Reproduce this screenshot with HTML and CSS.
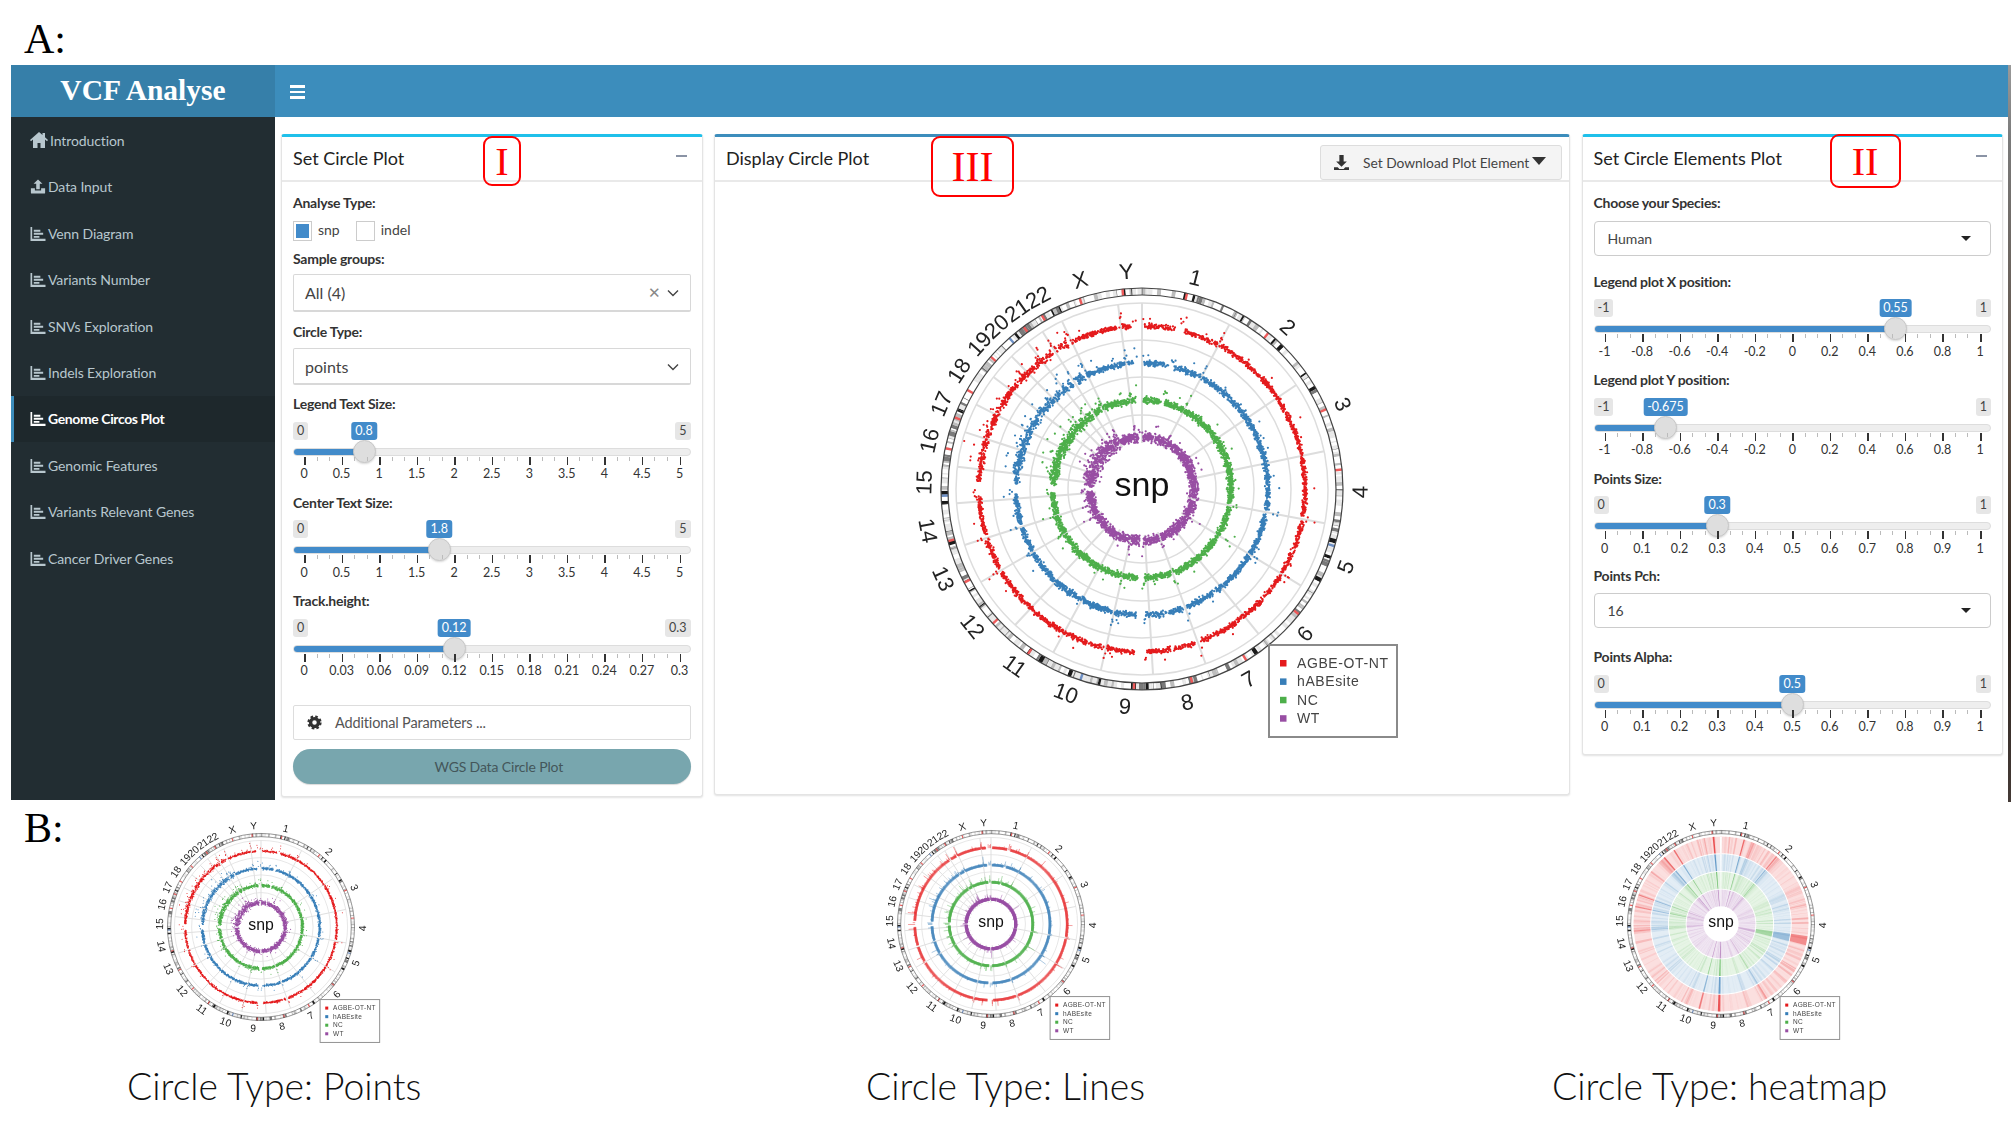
FILE: index.html
```html
<!DOCTYPE html>
<html lang="en">
<head>
<meta charset="utf-8">
<title>VCF Analyse</title>
<link rel="stylesheet" href="styles.css">
</head>
<body>
<div class="page">
  <div class="fig-head"><span class="fig-letter">A:</span></div>

  <section class="app">
    <header class="topbar">
      <div class="logo">VCF Analyse</div>
      <div class="nav"><span class="burger"><i></i><i></i><i></i></span></div>
    </header>
    <div class="app-body">
      <nav class="sidebar">
        <a class="item item-home"><svg class="ico" viewBox="0 0 18 16"><path d="M9 0 0 8l1 1.2L3 7.600V16h4.500v-5h3v5H15V7.600l2 1.600L18 8l-3-2.700V1h-2.500v2.100z"/></svg>Introduction</a>
        <a class="item"><svg class="ico" viewBox="0 0 18 16"><path d="M9 0 4 5h3v6h4V5h3zM1 10h4.500v2.500h7V10H17v5a1 1 0 0 1-1 1H2a1 1 0 0 1-1-1z"/></svg>Data Input</a>
        <a class="item"><svg class="ico" viewBox="0 0 16 16"><use href="#barchart"/></svg>Venn Diagram</a>
        <a class="item"><svg class="ico" viewBox="0 0 16 16"><use href="#barchart"/></svg>Variants Number</a>
        <a class="item"><svg class="ico" viewBox="0 0 16 16"><use href="#barchart"/></svg>SNVs Exploration</a>
        <a class="item"><svg class="ico" viewBox="0 0 16 16"><use href="#barchart"/></svg>Indels Exploration</a>
        <a class="item active"><svg class="ico" viewBox="0 0 16 16"><use href="#barchart"/></svg>Genome Circos Plot</a>
        <a class="item"><svg class="ico" viewBox="0 0 16 16"><use href="#barchart"/></svg>Genomic Features</a>
        <a class="item"><svg class="ico" viewBox="0 0 16 16"><use href="#barchart"/></svg>Variants Relevant Genes</a>
        <a class="item"><svg class="ico" viewBox="0 0 16 16"><use href="#barchart"/></svg>Cancer Driver Genes</a>
      </nav>

      <main class="content">
        <article class="box box-side box-left">
          <div class="box-head">
            <h3 class="box-title">Set Circle Plot</h3>
            <span class="tag tag-1">I</span>
            <span class="minus"></span>
          </div>
          <div class="box-body">
            <div class="lbl">Analyse Type:</div>
            <div class="checks">
              <span class="check on"></span><span class="check-text">snp</span>
              <span class="check"></span><span class="check-text">indel</span>
            </div>
            <div class="lbl lbl-a">Sample groups:</div>
            <div class="picker picker-a">All (4)
              <span class="picker-x">&#10005;</span>
              <svg class="chev" viewBox="0 0 12 8"><path d="M1 1.500 6 6.500 11 1.500"/></svg>
            </div>
            <div class="lbl lbl-b">Circle Type:</div>
            <div class="picker picker-b">points
              <svg class="chev" viewBox="0 0 12 8"><path d="M1 1.500 6 6.500 11 1.500"/></svg>
            </div>
            <div class="lbl lbl-d">Legend Text Size:</div>
            <div class="slider" data-min="0" data-max="5" data-value="0.8" data-ticks="0,0.5,1,1.5,2,2.5,3,3.5,4,4.5,5"></div>
            <div class="lbl">Center Text Size:</div>
            <div class="slider" data-min="0" data-max="5" data-value="1.8" data-ticks="0,0.5,1,1.5,2,2.5,3,3.5,4,4.5,5"></div>
            <div class="lbl">Track.height:</div>
            <div class="slider" data-min="0" data-max="0.3" data-value="0.12" data-ticks="0,0.03,0.06,0.09,0.12,0.15,0.18,0.21,0.24,0.27,0.3"></div>
            <div class="extra">
              <svg class="gear" viewBox="0 0 16 16"><circle cx="8" cy="8" r="4.200" class="gear-ring"/><circle cx="8" cy="8" r="6.300" class="gear-teeth"/></svg>
              Additional Parameters ...
            </div>
            <div class="run">WGS Data Circle Plot</div>
          </div>
        </article>

        <article class="box box-main">
          <div class="box-head">
            <h3 class="box-title">Display Circle Plot</h3>
            <span class="tag tag-3">III</span>
            <span class="dl-btn">
              <svg class="dl-ico" viewBox="0 0 14 14"><path d="M5 0h4v6h3L7 11 2 6h3zM0 11.500h3.500L5 13h4l1.500-1.500H14V14H0z"/></svg>
              Set Download Plot Element<i class="dl-caret"></i>
            </span>
          </div>
          <div class="box-plot">
            <svg class="circos circos-big" data-type="points" data-seed="11" viewBox="0 0 520 520"></svg>
          </div>
        </article>

        <article class="box box-side box-right">
          <div class="box-head">
            <h3 class="box-title">Set Circle Elements Plot</h3>
            <span class="tag tag-2">II</span>
            <span class="minus"></span>
          </div>
          <div class="box-body">
            <div class="lbl">Choose your Species:</div>
            <div class="picker picker-c">Human<i class="caret"></i></div>
            <div class="lbl lbl-c">Legend plot X position:</div>
            <div class="slider" data-min="-1" data-max="1" data-value="0.55" data-ticks="-1,-0.8,-0.6,-0.4,-0.2,0,0.2,0.4,0.6,0.8,1"></div>
            <div class="lbl">Legend plot Y position:</div>
            <div class="slider" data-min="-1" data-max="1" data-value="-0.675" data-ticks="-1,-0.8,-0.6,-0.4,-0.2,0,0.2,0.4,0.6,0.8,1"></div>
            <div class="lbl">Points Size:</div>
            <div class="slider" data-min="0" data-max="1" data-value="0.3" data-ticks="0,0.1,0.2,0.3,0.4,0.5,0.6,0.7,0.8,0.9,1"></div>
            <div class="lbl lbl-e">Points Pch:</div>
            <div class="picker picker-c">16<i class="caret"></i></div>
            <div class="lbl lbl-f">Points Alpha:</div>
            <div class="slider" data-min="0" data-max="1" data-value="0.5" data-ticks="0,0.1,0.2,0.3,0.4,0.5,0.6,0.7,0.8,0.9,1"></div>
          </div>
        </article>
      </main>
      <div class="edge"></div>
    </div>
  </section>

  <section class="gallery">
    <span class="fig-letter fig-b">B:</span>
    <svg class="circos circos-small s1" data-type="points" data-seed="21" viewBox="0 0 520 520"></svg>
    <svg class="circos circos-small s2" data-type="lines" data-seed="32" viewBox="0 0 520 520"></svg>
    <svg class="circos circos-small s2" data-type="heatmap" data-seed="43" viewBox="0 0 520 520"></svg>
    <div class="cap c1">Circle Type: Points</div>
    <div class="cap c2">Circle Type: Lines</div>
    <div class="cap c3">Circle Type: heatmap</div>
  </section>
</div>

<svg class="defs" width="0" height="0"><defs>
  <g id="barchart"><path d="M0 1h1.800v12.700H16V16H0zM3.500 4h7v2h-7zM3.500 7.300h10v2h-10zM3.500 10.600h6v2h-6z"/></g>
</defs></svg>
<script src="app.js"></script>
</body>
</html>
```
FILE: styles.css
```css
* { box-sizing: border-box; }
html, body { margin: 0; padding: 0; background: #fff; }
body { font-family: "Lato", "Noto Sans", sans-serif; color: #333; }
.page { width: 2011px; height: 1131px; overflow: hidden; position: relative; }
.defs { position: absolute; }

.fig-head { height: 65px; padding: 16px 0 0 24px; }
.fig-letter { font-family: "Liberation Serif", serif; font-size: 42px; line-height: 46px; color: #000; display: block; }

.app { margin-left: 11px; height: 735px; display: flex; flex-direction: column; }
.topbar { display: flex; height: 52px; flex: none; }
.logo { width: 264px; background: #367fa9; color: #fff; font-family: "Liberation Serif", serif; font-weight: 700; font-size: 29.500px; line-height: 50px; text-align: center; }
.nav { flex: 1; background: #3c8dbc; padding: 20px 0 0 15px; }
.burger { display: flex; flex-direction: column; gap: 3px; width: 15px; }
.burger i { display: block; height: 2.500px; background: #fff; }

.app-body { flex: 1; display: flex; min-height: 0; position: relative; }
.sidebar { width: 264px; flex: none; background: #222d32; padding-top: 0.300px; }
.item { height: 46.400px; display: flex; align-items: center; padding-left: 19px; font-size: 14px; color: #b8c7ce; letter-spacing: -0.100px; position: relative; }
.item.active { background: #1e282c; color: #fff; font-weight: 700; letter-spacing: -0.400px; }
.item.active::before { content: ""; position: absolute; left: 0; top: 0; bottom: 0; width: 3px; background: #3c8dbc; }
.ico { width: 16px; height: 15px; fill: currentColor; margin-right: 2px; flex: none; }
.item-home .ico { width: 18px; height: 16px; margin-right: 2px; }

.content { flex: 1; display: flex; align-items: flex-start; gap: 11.500px; padding: 17px 8px 0 6px; }
.box { background: #fff; border: 1px solid #e4e4e4; border-top: 3px solid #1fc0ea; border-radius: 3px; box-shadow: 0 1px 2px rgba(0,0,0,.12); }
.box-side { width: 421.500px; flex: none; }
.box-left { height: 663px; }
.box-right { height: 621px; }
.box-main { flex: 1; height: 661px; border-top-color: #3c8dbc; }
.box-head { height: 45px; border-bottom: 2px solid #e9e9e9; padding: 0 11px 2px; display: flex; align-items: center; position: relative; }
.box-title { margin: 0; font-size: 18px; font-weight: 400; color: #222; letter-spacing: 0; line-height: 24px; }
.minus { position: absolute; right: 15px; top: 18px; width: 11px; height: 2px; background: #8a93a5; }

.tag { position: absolute; border: 2px solid #f00; border-radius: 9px; color: #f00; font-family: "Liberation Serif", serif; background: transparent; display: flex; align-items: center; justify-content: center; }
.tag-1 { left: 201px; top: -1px; width: 38px; height: 50px; font-size: 40px; }
.tag-2 { left: 247px; top: -3px; width: 71px; height: 54px; font-size: 40px; }
.tag-3 { left: 216px; top: -1px; width: 83px; height: 61px; font-size: 42px; }

.box-body { padding: 11px 11px 0; }
.lbl { font-weight: 700; font-size: 14px; line-height: 20px; height: 20px; margin-bottom: 7.500px; color: #333; letter-spacing: -0.250px; }
.lbl-a { margin-top: 8.500px; margin-bottom: 5px; }
.lbl-b { margin-top: 10px; margin-bottom: 6px; }
.lbl-c { margin-top: 16px; }
.lbl-d { margin-top: 9px; }
.lbl-e { margin-top: -1.400px; margin-bottom: 6.500px; }
.lbl-f { margin-top: 19.500px; }

.checks { display: flex; align-items: center; height: 20px; font-size: 14px; color: #444; }
.check { width: 19px; height: 20px; border: 1px solid #ccc; background: #fff; flex: none; }
.check.on { background: #428bca; box-shadow: inset 0 0 0 2px #fff; }
.check-text { margin: 0 16px 0 6px; padding-bottom: 2px; }

.picker { border: 1px solid #d8d8d8; display: flex; align-items: center; position: relative; color: #444; }
.picker-a { height: 38px; padding: 0 11px; font-size: 16px; border-bottom-width: 2px; border-radius: 2px; }
.picker-b { height: 37px; padding: 0 11px; font-size: 16px; border-bottom-width: 2px; border-radius: 2px; }
.picker-c { height: 35px; padding: 0 13px; font-size: 14px; border: 1px solid #ccc; border-radius: 4px; color: #444; }
.picker-x { position: absolute; right: 29px; top: 8px; font-size: 15px; color: #888; line-height: 18px; }
.chev { position: absolute; right: 11px; top: 14px; width: 12px; height: 8px; fill: none; stroke: #444; stroke-width: 1.400px; }
.caret { position: absolute; right: 19px; top: 14px; width: 0; height: 0; border: 5px solid transparent; border-top: 5px solid #222; border-left-width: 5px; }

.slider { position: relative; height: 62px; margin-bottom: 9.200px; }
.sl-head { display: flex; justify-content: space-between; height: 18px; margin-bottom: 8px; }
.sl-end { background: #e6e6e6; color: #444; border-radius: 3px; font-size: 12.500px; line-height: 18px; padding: 0 4px; }
.sl-val { position: absolute; top: 0; left: calc(11px + (100% - 22px) * var(--p)); transform: translateX(-50%); background: #428bca; color: #fff; border-radius: 3px; font-size: 12.500px; line-height: 18px; padding: 0 4px; white-space: nowrap; }
.sl-track { position: relative; height: 8px; background: #eee; border: 1px solid #ddd; border-radius: 4px; overflow: hidden; }
.sl-fill { height: 100%; width: calc(11px + (100% - 22px) * var(--p)); background: #428bca; }
.sl-thumb { position: absolute; top: 18px; left: calc(11px + (100% - 22px) * var(--p)); width: 23px; height: 23px; margin-left: -11.500px; border-radius: 50%; background: #dedede; border: 1px solid #c8c8c8; box-shadow: 0 1px 2px rgba(0,0,0,.15); }
.sl-grid { position: relative; margin: 1px 11px 0; height: 27px; }
.tk { position: absolute; top: 0; left: calc(100% * var(--t)); width: 1px; height: 4px; background: #bbb; }
.tk.big { width: 1.500px; height: 8px; background: #333; }
.tn { position: absolute; top: 9.500px; left: calc(100% * var(--t)); transform: translateX(-50%); font-size: 12.500px; line-height: 16px; color: #333; white-space: nowrap; }

.extra { margin-top: 24px; height: 35px; border: 1px solid #ddd; border-radius: 2px; display: flex; align-items: center; padding-left: 13px; font-size: 14.500px; color: #555; letter-spacing: -0.150px; }
.gear { width: 15px; height: 15px; margin-right: 13px; }
.gear-ring { fill: none; stroke: #333; stroke-width: 3.600px; }
.gear-teeth { fill: none; stroke: #333; stroke-width: 2.600px; stroke-dasharray: 2.700 2.250; }
.run { margin-top: 9px; height: 35px; border-radius: 18px; background: #78a6ae; color: #44565a; font-size: 14px; line-height: 35px; text-align: center; padding-left: 14px; letter-spacing: -0.150px; box-shadow: 0 1px 1px rgba(0,0,0,.15); }

.dl-btn { position: absolute; right: 7px; top: 8px; width: 242px; height: 35px; background: #f4f4f4; border: 1px solid #ddd; border-radius: 3px; display: flex; align-items: center; padding-left: 13px; font-size: 13.800px; color: #444; white-space: nowrap; }
.dl-ico { width: 15px; height: 15px; fill: #333; margin-right: 14px; flex: none; }
.dl-caret { width: 0; height: 0; margin: -3px 0 0 3px; border: 7px solid transparent; border-top: 8px solid #333; border-bottom: 0; }

.box-plot { display: flex; justify-content: center; padding-top: 47px; }
.circos { display: block; }
.circos-big { width: 520px; height: 520px; filter: blur(.5px); }
.circos-small { width: 242px; height: 242px; filter: blur(.55px); margin-left: 51px; }
.s1 { margin-top: 6px; margin-left: 50px; }
.s2 { margin-top: 3px; }

.ring { fill: none; stroke: #444; stroke-width: 1.200px; }
.chr { font-family: "Liberation Sans", sans-serif; font-size: 22px; text-anchor: middle; dominant-baseline: central; fill: #222; }
.trk { fill: none; stroke: #ddd; stroke-width: 1.500px; }
.spoke { fill: none; stroke: #ddd; stroke-width: 2px; }
.lg { fill: #fff; stroke: #8a8a8a; stroke-width: 2px; }
.lgt { font-family: "Liberation Sans", sans-serif; font-size: 14px; letter-spacing: .6px; fill: #444; }
.center { font-family: "Liberation Sans", sans-serif; font-size: 34px; text-anchor: middle; fill: #111; }
.ln { fill: none; stroke-width: .9px; }

.edge { position: absolute; right: 0; top: -52px; bottom: -2px; width: 3px; background: linear-gradient(#9a9a9a, #7a7a7a 10%, #5a4a3e 50%, #2e241e 75%, #443a36); }

.gallery { display: grid; grid-template-columns: 729px 730px 1fr; grid-template-rows: 264px auto; padding-left: 90px; position: relative; }
.fig-b { position: absolute; left: 24px; top: 5px; }
.cap { font-size: 37.300px; font-weight: 300; line-height: 44px; color: #111; white-space: nowrap; }
.c1 { margin-left: 37px; }
.c2 { margin-left: 47px; }
.c3 { margin-left: 3px; }
```
FILE: app.js
```js
// Builds the range sliders and the circos plots from their data.
function el(cls, text) { var e = document.createElement("div"); e.className = cls; if (text !== undefined) e.textContent = text; return e; }

document.querySelectorAll(".slider").forEach(function (s) {
  var min = +s.dataset.min, max = +s.dataset.max, val = +s.dataset.value;
  var ticks = s.dataset.ticks.split(",");
  s.style.setProperty("--p", (val - min) / (max - min));
  var head = el("sl-head");
  head.appendChild(el("sl-end", s.dataset.min));
  head.appendChild(el("sl-end", s.dataset.max));
  s.appendChild(head);
  s.appendChild(el("sl-val", s.dataset.value));
  var track = el("sl-track");
  track.appendChild(el("sl-fill"));
  s.appendChild(track);
  s.appendChild(el("sl-thumb"));
  var grid = el("sl-grid");
  var n = ticks.length - 1;
  ticks.forEach(function (t, i) {
    var big = el("tk big"); big.style.setProperty("--t", i / n); grid.appendChild(big);
    var num = el("tn", t); num.style.setProperty("--t", i / n); grid.appendChild(num);
    if (i < n) for (var k = 1; k < 3; k++) {
      var m = el("tk"); m.style.setProperty("--t", (i + k / 3) / n); grid.appendChild(m);
    }
  });
  s.appendChild(grid);
});

// Chromosome layout, in degrees clockwise from the top.
var STARTS = [0,28,56,78.3,100.6,121.3,141.2,160,176.6,192.8,208.5,223,240,252.5,265.6,276.9,287.8,297,307,315.5,322,327.7,334.5,352.6];
var LABEL_AT = [14.2,42,67.1,90.8,110.9,131.6,150.7,168,184.5,200.4,215.7,231,245.7,259,271.7,282.8,293,302.9,311.8,318.2,325,331.5,343.5,355.9];
var GAPS = [[358.5,2.4],[13.5,1.3],[100.5,1],[160,.9],[180.5,2.2],[193,.6],[240,.7],[253,.8],[270,2.4],[327.5,.8],[333.5,.7],[352.6,.5],[121.3,.5],[28,.4]];
var CENT = [.45,.38,.46,.26,.27,.35,.38,.31,.33,.3,.4,.27,.15,.16,.19,.41,.3,.22,.45,.44,.27,.29,.39,.2];
var SPAN = STARTS.map(function (s, i) { return (i < 23 ? STARTS[i + 1] : 360) - s; });
var NAMES = ["1","2","3","4","5","6","7","8","9","10","11","12","13","14","15","16","17","18","19","20","21","22","X","Y"];
var COLORS = ["#e41a1c","#377eb8","#4daf4a","#984ea3"];
var LEGEND = ["AGBE-OT-NT","hABEsite","NC","WT"];
var C = 260;

function rng(seed) {
  return function () {
    seed |= 0; seed = seed + 0x6D2B79F5 | 0;
    var t = Math.imul(seed ^ seed >>> 15, 1 | seed);
    t = t + Math.imul(t ^ t >>> 7, 61 | t) ^ t;
    return ((t ^ t >>> 14) >>> 0) / 4294967296;
  };
}
function pt(r, a) { var q = a * Math.PI / 180; return (C + r * Math.sin(q)).toFixed(2) + " " + (C - r * Math.cos(q)).toFixed(2); }
function wedge(r0, r1, a0, a1) { return "M" + pt(r1, a0) + "L" + pt(r1, a1) + "L" + pt(r0, a1) + "L" + pt(r0, a0) + "Z"; }
function chrAt(a) { a = (a + 360) % 360; for (var i = 23; i >= 0; i--) if (a >= STARTS[i]) return i; return 0; }

function ideogram() {
  var R = rng(5), out = "", shades = ["#ffffff","#e8e8e8","#bdbdbd","#7a7a7a","#1a1a1a"];
  var cum = [.36,.66,.84,.93,1];
  SPAN.forEach(function (sp, i) {
    var a = STARTS[i], end = a + sp;
    while (a < end) {
      var w = Math.min(.3 + R() * 1.1, end - a), u = R(), c = 0;
      while (u > cum[c]) c++;
      out += '<path d="' + wedge(194, 201, a, a + w) + '" fill="' + shades[c] + '"/>';
      a += w;
    }
    var cen = STARTS[i] + CENT[i] * sp;
    out += '<path d="' + wedge(194, 201, cen, cen + .7) + '" fill="' + (i % 5 === 4 ? "#6d8fc4" : "#ee5a5a") + '"/>';
    out += '<path d="' + wedge(194, 201, STARTS[i], STARTS[i] + .12) + '" fill="#555"/>';
  });
  out += '<circle cx="260" cy="260" r="201" class="ring"/><circle cx="260" cy="260" r="194" class="ring"/>';
  return out;
}

function labels() {
  return NAMES.map(function (n, i) {
    var a = LABEL_AT[i];
    var rot = (a > 90 && a < 270) ? a - 180 : a;
    var q = a * Math.PI / 180, x = C + 218 * Math.sin(q), y = C - 218 * Math.cos(q);
    return '<text x="' + x.toFixed(1) + '" y="' + y.toFixed(1) + '" class="chr" transform="rotate(' + rot.toFixed(1) + " " + x.toFixed(1) + " " + y.toFixed(1) + ')">' + n + "</text>";
  }).join("");
}

function legend() {
  var s = '<rect x="387" y="416" width="128" height="92" class="lg"/>';
  LEGEND.forEach(function (t, i) {
    var y = 434 + i * 18.4;
    s += '<rect x="398" y="' + (y - 3) + '" width="6.5" height="6.5" fill="' + COLORS[i] + '"/>';
    s += '<text x="415" y="' + (y + 5) + '" class="lgt">' + t + "</text>";
  });
  return s;
}

var BASE = [163, 126, 89, 52], OUTER = [186, 149, 112, 74], SD = [1.3, 1.5, 1.7, 2.5];

function grid() {
  var s = "";
  OUTER.forEach(function (r, t) {
    s += '<circle cx="260" cy="260" r="' + r + '" class="trk"/>';
    var inner = t === 3 ? 46 : OUTER[t + 1];
    STARTS.forEach(function (a) {
      s += '<path d="M' + pt(r, a) + "L" + pt(inner, a) + '" class="spoke"/>';
    });
  });
  return s;
}

function gauss(R) { return (R() + R() + R() + R() - 2) * 1.55; }

function outliers(seed) {
  var R = rng(seed), list = [];
  SPAN.forEach(function (sp, i) {
    var rate = i >= 15 && i <= 21 ? .22 : i === 0 || i === 8 || i === 2 || i === 22 || i === 23 ? .08 : .03;
    var n = Math.round(sp * rate * 2.4);
    for (var k = 0; k < n; k++) list.push(STARTS[i] + R() * sp);
  });
  GAPS.forEach(function (g) {
    for (var k = 0; k < 3; k++) list.push(g[0] + (R() - .5) * g[1] * 2);
  });
  return list;
}

function blocked(a) {
  return GAPS.some(function (g) {
    var d = Math.abs(a - g[0]); if (d > 180) d = 360 - d;
    return d < g[1];
  });
}

function dots(seed) {
  var R = rng(seed), list = outliers(seed + 100), s = "", rad = 1.1;
  function dot(r, a) {
    var q = a * Math.PI / 180, x = C + r * Math.sin(q), y = C - r * Math.cos(q);
    return "M" + (x - rad).toFixed(2) + " " + y.toFixed(2) + "a" + rad + " " + rad + " 0 1 0 " + 2 * rad + " 0a" + rad + " " + rad + " 0 1 0 " + -2 * rad + " 0";
  }
  BASE.forEach(function (r0, t) {
    var d = "", n = 360 * (t === 3 ? 6 : 8);
    for (var j = 0; j < n; j++) {
      var a = R() * 360, i = chrAt(a);
      if (blocked(a)) continue;
      var f = i >= 15 && i <= 21 ? 1.5 : 1;
      d += dot(r0 + gauss(R) * SD[t] * f, a);
    }
    list.forEach(function (a) {
      if (R() < .12) return;
      var i = chrAt(a), big = i >= 15 && i <= 21;
      d += dot(r0 + 4 + R() * R() * (big ? 16 : 12) + (R() < .25 ? 3 : 0), a + (R() - .5) * .3);
    });
    s += '<path d="' + d + '" fill="' + COLORS[t] + '"/>';
  });
  return s;
}

function lines(seed) {
  var R = rng(seed), list = outliers(seed + 100), s = "";
  BASE.forEach(function (r0, t) {
    var d = "";
    for (var a = 0; a < 360; a += .22) {
      if (blocked(a)) continue;
      var h = 2.8 + R() * 1.4 + (t === 3 ? .8 : 0);
      d += "M" + pt(r0 - 2, a) + "L" + pt(r0 + h, a);
    }
    list.forEach(function (a) {
      if (R() < .2) return;
      d += "M" + pt(r0, a) + "L" + pt(r0 + 5 + R() * R() * 18, a);
    });
    s += '<path d="' + d + '" class="ln" stroke="' + COLORS[t] + '"/>';
  });
  return s;
}

function heatmap(seed) {
  var R = rng(seed), bands = [[152,188],[114,150],[76,112],[38,74]], stripes = [], s = "";
  for (var k = 0; k < 320; k++) stripes.push([R() * 360, .25 + R() * 1.6, R() * R() * .22]);
  var strong = [[354.5,1.1,.7],[15,.9,.6],[39,1,.45],[327,1,.55],[319,1,.5],[289,.8,.4],[281,.8,.4],[265,.7,.35],[180.5,1.6,.7],[194,1,.45],[148,1.2,.3]];
  bands.forEach(function (b, t) {
    var col = COLORS[t], mid = (b[0] + b[1]) / 2, w = b[1] - b[0];
    s += '<circle cx="260" cy="260" r="' + mid + '" fill="none" stroke="' + col + '" stroke-width="' + w + '" stroke-opacity=".14"/>';
    stripes.forEach(function (p) {
      s += '<path d="' + wedge(b[0], b[1], p[0], p[0] + p[1]) + '" fill="' + col + '" fill-opacity="' + (p[2] * (.7 + R() * .6)).toFixed(2) + '"/>';
    });
    strong.forEach(function (p) {
      s += '<path d="' + wedge(b[0], b[1], p[0], p[0] + p[1]) + '" fill="' + col + '" fill-opacity="' + p[2] + '"/>';
    });
    var wide = t === 3 ? [100, 104, .35] : [98, 104, .42];
    s += '<path d="' + wedge(b[0], b[1], wide[0], wide[1]) + '" fill="' + col + '" fill-opacity="' + wide[2] + '"/>';
    s += '<path d="' + wedge(b[0], b[1], 359.3, 360.6) + '" fill="#fff"/>';
  });
  return s;
}

document.querySelectorAll(".circos").forEach(function (svg) {
  var type = svg.dataset.type, seed = +svg.dataset.seed, h = ideogram() + labels();
  if (type === "points") h += grid() + dots(seed);
  else if (type === "lines") h += grid() + lines(seed);
  else h += heatmap(seed);
  h += '<text x="260" y="267" class="center">snp</text>' + legend();
  svg.innerHTML = h;
});
```
